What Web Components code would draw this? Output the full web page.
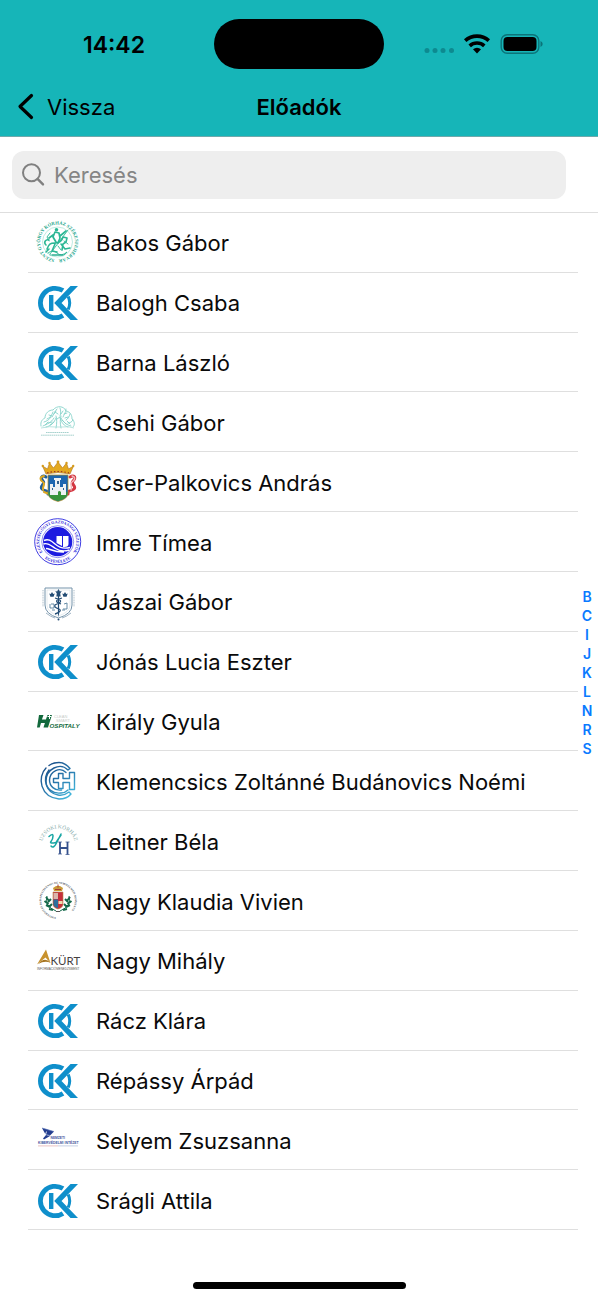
<!DOCTYPE html>
<html lang="hu">
<head>
<meta charset="utf-8">
<meta name="viewport" content="width=device-width, initial-scale=1">
<title>Előadók</title>
<style>
  html, body {
    margin: 0;
    padding: 0;
  }

  body {
    background: #fff;
    color: #0a0a0a;
    font-family: Inter, "Liberation Sans", sans-serif;
  }
</style>
</head>
<body>
<speakers-screen></speakers-screen>

<script>
/* Organisation logos, all drawn on a 48x48 canvas */
const LOGOS = {
  ck: `
    <g fill="none" stroke="#0f8fcb">
      <path d="M29 12.600A14.700 14.700 0 1 0 29 37.400" stroke-width="4.800"/>
      <path d="M17.200 17v16" stroke-width="4.400"/>
      <path d="M34.200 18.500q3 6.500 0 13" stroke-width="3"/>
    </g>
    <path d="M36.500 8H44L27.500 25 44 42h-7.500L20.200 25z" fill="#0f8fcb"/>`,

  gyorgy: `
    <path id="ring" d="M23.500 41.500a17.500 17.500 0 1 1 .1 0" fill="none"/>
    <circle cx="23.500" cy="24" r="15" fill="none" stroke="#7fd6c2" stroke-width=".5"/>
    <text font-family="Liberation Serif" font-weight="700" font-size="4.700" fill="#21a58a"><textPath href="#ring" startOffset="3">SZENT GYÖRGY KÓRHÁZ SZÉKESFEHÉRVÁR</textPath></text>
    <g fill="none" stroke="#2cb795" stroke-linecap="round" stroke-linejoin="round">
      <path d="M13 31c2-5 3-6 8-6s7-2 8-6l4 1-1 4-3 2-1 6M15 31l-3 3M21 26l-3 7 5 1M27 26l4 5 5-1M12 27c-3-3 0-6 3-5" stroke-width="1.600"/>
      <path d="M22 24l-3-5 2-5 4 1 1 5-2 5M19 17l-4 3M26 18l6-5" stroke-width="1.700"/>
      <path d="M34 12L16 36M14 35q5-4 9 0t10-1l-3 3H16M16 15l-3 4 2 4M24 28l3 4M30 23l4 3" stroke-width=".9"/>
    </g>
    <circle cx="22.500" cy="11.800" r="1.800" fill="#2cb795"/>
    <path d="M18 37h11" stroke="#21a58a" stroke-width="1"/>`,

  tree: `
    <g fill="none" stroke="#86d3ca" stroke-width=".9" stroke-linecap="round">
      <path d="M7 28c-1-5 2-7 4-8 0-5 4-8 8-8 4-5 11-4 13 1 5 1 6 5 6 8 3 3 3 6 1 8"/>
      <path d="M9 28c4-2 8-3 11-8M12 29c5-1 8-4 10-9M37 28c-4-1-7-3-10-8M34 29c-4-1-6-4-8-9M22 30c1-5 1-8 0-12M27 30c-1-5-1-8 0-12"/>
      <path d="M10 24c3-1 5-2 7-5M13 21c3-1 5-4 6-7M18 19c2-3 3-6 5-8M26 18c1-3 1-5 0-8M29 19c1-3 3-4 3-8M32 22c2-1 3-3 4-6M34 25c2 0 4-1 5-3"/>
      <path d="M14 25l4-1M15 17l3 1M21 14l3 2M29 13l-2 3M34 19l-3 1M16 27l4-3M32 26l-4-4M11 27l3-3M36 26l-3-3M20 16l2-3M30 16l3-1M23 21l3-2"/>
    </g>
    <path d="M7 30q9-2 15-1h6q7-1 12 1" fill="none" stroke="#a9ded8" stroke-width=".8"/>
    <path d="M12 34.500h23M7 37.200h33" stroke="#9cccc7" stroke-width=".9" stroke-dasharray="1.600 .5"/>`,

  castle: `
    <g fill="none" stroke-width="3" stroke-linecap="round">
      <path d="M12 19c-4-3-6 1-3 4s-4 5-1 8 6 0 6 5" stroke="#1f5f9c"/>
      <path d="M10 18c-5 1-4 4-1 6s-1 5 0 8M10 34l5 2" stroke="#dca722" stroke-width="2"/>
      <path d="M36 19c5-3 6 1 3 4s4 5 1 8-6 0-6 5" stroke="#d33742"/>
      <path d="M38 18c4 1 3 4 0 6s1 5-1 8" stroke="#f1b5b9" stroke-width="1.400"/>
    </g>
    <path d="M14 17h20v18q0 6-10 8.500Q14 41 14 35z" fill="#1d66b0" stroke="#b8901c" stroke-width=".7"/>
    <path d="M14.500 34q9-3 19 0v2q-1 5-9.500 7-9-2-9.500-7z" fill="#36933b"/>
    <path d="M16 37V26h3v3h2v-7h-1v-2h7v2h-1v7h3v-3h3v11h-5v-3q-2-2-3 0v3z" fill="#edf1f4"/>
    <path d="M23 23h2v3h-2zM18 30h1v2h-1zM29 30h1v2h-1z" fill="#315f8d"/>
    <path d="M12 16L8.500 8l5 3 2-6 4 5L24 4l4.500 6 4-5 2 6 5-3L36 16q-12-3-24 0z" fill="#e4a91f" stroke="#ad721b" stroke-width=".6"/>
    <path d="M13 15q11-3 22 0" fill="none" stroke="#9c3424" stroke-width="1.200" stroke-dasharray="1.500 2"/>
    <g fill="#d69b1c"><circle cx="24" cy="4" r="1.400"/><circle cx="15.500" cy="5" r="1.200"/><circle cx="32.500" cy="5" r="1.200"/><circle cx="8.800" cy="8" r="1.200"/><circle cx="39.200" cy="8" r="1.200"/></g>`,

  economy: `
    <path id="top" d="M8.500 34.200a18.500 18.500 0 1 1 30.500 0" fill="none"/>
    <path id="low" d="M8.500 38.500a21.300 21.300 0 0 0 30.500 0" fill="none"/>
    <circle cx="23.700" cy="23.700" r="23" fill="none" stroke="#2a28df" stroke-width=".9"/>
    <circle cx="23.700" cy="23.700" r="16" fill="none" stroke="#2a28df" stroke-width=".5"/>
    <g font-family="Liberation Serif" font-weight="700" font-size="4.100" fill="#2320d8">
      <text><textPath href="#top" startOffset="50%" text-anchor="middle">EGÉSZSÉGÜGYI GAZDASÁGI VEZETŐK</textPath></text>
      <text><textPath href="#low" startOffset="50%" text-anchor="middle">EGYESÜLETE</textPath></text>
    </g>
    <circle cx="23.700" cy="23.700" r="14.600" fill="#1d1be0"/>
    <path d="M22.500 18h5.500v10l-5.500-3zM29 18h5.500v8q0 3-4 3H29z" fill="#fff"/>
    <path d="M10 22.500c4-2 7 0 11 3.500s9 5 15 3.500M9.500 26c4-2 8 2 12 4.500s9 3 14 1.500M12 30.500c4 0 8 4 18 3.500" fill="none" stroke="#fff" stroke-width="1.400"/>`,

  shield: `
    <path d="M11 11h27v17q0 9-13.500 13Q11 37 11 28z" fill="#fff" stroke="#7593aa" stroke-width="1"/>
    <path d="M13 13h23v15q0 7-11.500 11Q13 35 13 28z" fill="none" stroke="#bdccd6" stroke-width=".4"/>
    <g fill="#244d75">
      <path d="M24.500 12l1.400 2.500 1.800-.5-1.500 2.500.5 3h-4.400l.5-3-1.500-2.500 1.800.5zM18 15l1.200 2 1.500-.4-1.100 3.200h-3.200l-1.100-3.200 1.500.4zM31 15l1.200 2 1.500-.4-1.100 3.200h-3.200l-1.100-3.200 1.500.4z"/>
      <path d="M23.900 18h1.200v19l-.6 3-.6-3z"/>
    </g>
    <g fill="none" stroke="#244d75">
      <path d="M21 21c7 2 7 4 2 6s-1 4 2 5 0 4-4 5M28 21c-7 2-7 4-1 6" stroke-width="1.300"/>
      <path d="M16 27v4h4v-4h-3M30 27l3-1v6h-4M18 33h3M28 33h3" stroke-width=".9" stroke="#557f9c"/>
    </g>
    <path d="M9 13v17M40 13v17" stroke="#93a8b7" stroke-width=".8" stroke-dasharray="1 .7"/>
    <path d="M12 36q5 4 9 5M37 36q-5 4-9 5" fill="none" stroke="#86a0b4" stroke-width=".8"/>
    <circle cx="24.500" cy="42.500" r="1" fill="#244d75"/>`,

  hospitaly: `
    <path d="M5 18h4.500l-1.600 4.500h4L13.500 18H18l-1.500 4.500L14 30.500H9.500l1.400-4.500H7l-1.300 4.500H3z" fill="#12693c"/>
    <path d="M13.500 19.500h4M15.500 18v4" stroke="#fff" stroke-width="1"/>
    <text x="15.500" y="30.500" font-family="Liberation Sans" font-size="6.200" font-weight="700" font-style="italic" fill="#12693c">OSPITALY</text>
    <g font-family="Liberation Sans" font-size="4" fill="#c8cdca"><text x="20" y="21">CLEAN</text><text x="22" y="24.800">SMART</text></g>`,

  cross: `
    <linearGradient id="sea" gradientUnits="userSpaceOnUse" x1="10" y1="8" x2="38" y2="40"><stop offset="0" stop-color="#174a85"/><stop offset=".55" stop-color="#2b7db1"/><stop offset="1" stop-color="#45bde0"/></linearGradient>
    <g fill="none" stroke="url(#sea)" stroke-width="1.400" stroke-linejoin="round" stroke-linecap="round">
      <path d="M12 11C3 20 6 40 25 42q8 0 12-5l-2-2q-5 4-11 3C12 36 8 22 15 13"/>
      <path d="M36 11.500Q31 5.500 25 5.500 19 5.500 15 8.500M36 11.500l-2 1.500C26 5 12 12 12 24c0 8 7 13 15 12q4 0 7-3"/>
      <path d="M32 15.500C26 9.500 16 14 15.500 23c0 6 5 11 12 10"/>
      <path d="M19.500 21.500h5v-5h4.500v5h6.500v-6h5v17h-5v-7H29v6h-4.500v-6h-5z"/>
    </g>`,

  uzsoki: `
    <path id="arc" d="M8.500 32A16.500 16.500 0 1 1 40.500 32" fill="none"/>
    <text font-family="Liberation Serif" font-size="5.400" fill="#84aaa9"><textPath href="#arc" startOffset="50%" text-anchor="middle">UZSOKI KÓRHÁZ</textPath></text>
    <path d="M15 19.500q4-3.500 4-.5t-2 5.500 5 1l5-7.500M27 17l-4.500 9q-3 6-5.500 3" fill="none" stroke="#18a6a4" stroke-width="1.500" stroke-linecap="round"/>
    <path d="M26 25v12M33.500 25v12.500M26 31h7.500" fill="none" stroke="#34508c" stroke-width="1.800"/>
    <path d="M24 25h4M24 37h4M31.500 25h4M31.500 37.500h4" stroke="#34508c" stroke-width=".7"/>`,

  university: `
    <path id="seal" d="M24 40.300a16.800 16.800 0 1 1 .1 0" fill="none"/>
    <text font-family="Liberation Serif" font-weight="700" font-size="2.800" fill="#515963"><textPath href="#seal" startOffset="2">UNIVERSITAS BUDAPESTINENSIS DE SEMMELWEIS NOMINATA</textPath></text>
    <g fill="none" stroke="#15694b">
      <path d="M13 19q-3 10 9 15M35 19q3 10-9 15" stroke-width="1"/>
      <path d="M12 20l3 4M10.500 24l4 3M12 28l4 2M15 32l4 1M17 22l-3 3M18 27l-3 3M36 20l-3 4M37.500 24l-4 3M36 28l-4 2M33 32l-4 1M31 22l3 3M30 27l3 3" stroke-width="2"/>
    </g>
    <path d="M19 15h10v13q-1 3-5 4-4-1-5-4z" fill="#c52f3c" stroke="#b38b48" stroke-width=".6"/>
    <path d="M19.500 22.500H24V31q-4-1-4.500-3.500z" fill="#2d6f9c"/>
    <path d="M19.500 16H24v6h-4.500z" fill="#d9b5ab"/>
    <path d="M24.500 24h4v3h-4z" fill="#f1d9ad"/>
    <path d="M20 14l-1-3 3-2h4l3 2-1 3z" fill="#c99a37"/>
    <path d="M21 12.500h6M24 7.500v3" stroke="#a63b32" stroke-width="1"/>
    <path d="M22 34.500h4" stroke="#555" stroke-width="1"/>`,

  kurt: `
    <path d="M12 13.500l4.500 13.500-5-5.500L3 28.500z" fill="#c8922d"/>
    <path d="M4 28q7-8 12.500-1-5-3-12.500 1z" fill="#a77420"/>
    <text x="16.500" y="29" font-family="Lato" font-size="11.500" fill="#46403f">KÜRT</text>
    <text x="3" y="33.700" font-family="Liberation Sans" font-size="3" fill="#595450">INFORMÁCIÓMENEDZSMENT</text>`,

  cyber: `
    <path d="M8 12l6 1.500-3 4zM13.500 13.500l6.500 2-4 4-4-1zM12 19l4 1-6 3.500-1-1z" fill="#233d8f"/>
    <path d="M8 12l12 3.500M11 17.500l5 2" stroke="#617abb" stroke-width=".6"/>
    <g font-family="Liberation Sans" font-weight="700" fill="#3f559c">
      <text x="16.500" y="23.400" font-size="3.300">NEMZETI</text>
      <text x="4" y="27.900" font-size="3.400">KIBERVÉDELMI INTÉZET</text>
    </g>
    <path d="M4 29.900h20" stroke="#e1aaa8" stroke-width=".7"/><path d="M24 29.900h20" stroke="#aebbd8" stroke-width=".7"/>`
};

const SPEAKERS = [
  ['Bakos Gábor', 'gyorgy'],
  ['Balogh Csaba', 'ck'],
  ['Barna László', 'ck'],
  ['Csehi Gábor', 'tree'],
  ['Cser-Palkovics András', 'castle'],
  ['Imre Tímea', 'economy'],
  ['Jászai Gábor', 'shield'],
  ['Jónás Lucia Eszter', 'ck'],
  ['Király Gyula', 'hospitaly'],
  ['Klemencsics Zoltánné Budánovics Noémi', 'cross'],
  ['Leitner Béla', 'uzsoki'],
  ['Nagy Klaudia Vivien', 'university'],
  ['Nagy Mihály', 'kurt'],
  ['Rácz Klára', 'ck'],
  ['Répássy Árpád', 'ck'],
  ['Selyem Zsuzsanna', 'cyber'],
  ['Srágli Attila', 'ck']
];

/**
 * Phone status bar: clock, camera cutout, signal, wifi and battery
 */
class StatusBar extends HTMLElement {
  constructor() {
    super();
    this.attachShadow({ mode: 'open' });
  }

  connectedCallback() {
    this.shadowRoot.innerHTML = `
      <style>
        :host {
          display: grid;
          grid-template-columns: 1fr 170px 1fr;
          align-items: center;
          padding: 19px 14px 9px;
        }

        .time {
          padding-top: 2px;
          text-align: center;
          font-size: 23px;
          font-weight: 600;
        }

        .cutout {
          height: 50px;
          border-radius: 25px;
          background: #000;
        }

        .icons {
          display: flex;
          justify-content: center;
          align-items: center;
        }

        svg {
          display: block;
        }
      </style>
      <time class="time">14:42</time>
      <div class="cutout"></div>
      <div class="icons">
        <svg width="120" height="24" viewBox="0 0 120 24" aria-hidden="true">
          <g fill="#0d8a90"><circle cx="3" cy="18.500" r="2.500"/><circle cx="11" cy="18.500" r="2.500"/><circle cx="19" cy="18.500" r="2.500"/><circle cx="27.500" cy="18.500" r="2.500"/></g>
          <g fill="none" stroke="#000" stroke-width="3.600">
            <path d="M41.200 8.700a17.500 17.500 0 0 1 23.600 0"/>
            <path d="M45.700 13.800a10.800 10.800 0 0 1 14.600 0"/>
          </g>
          <path d="M49 17.200a6 6 0 0 1 8 0l-4 4.200z"/>
          <rect x="77.200" y="2.700" width="37.600" height="18.600" rx="6" fill="none" stroke="#0b7479" stroke-width="1.400"/>
          <rect x="79.500" y="5" width="33" height="14" rx="4"/>
          <path d="M116.500 9v6q2.200-.8 2.200-3t-2.200-3z" fill="#0b7479"/>
        </svg>
      </div>
    `;
  }
}

/**
 * Navigation bar with a back button and a slotted title
 */
class NavHeader extends HTMLElement {
  constructor() {
    super();
    this.attachShadow({ mode: 'open' });
  }

  connectedCallback() {
    this.shadowRoot.innerHTML = `
      <style>
        :host {
          display: grid;
          grid-template-columns: 1fr auto 1fr;
          align-items: center;
          height: 58px;
          border-bottom: 1px solid #6fa9ab;
        }

        button {
          display: flex;
          align-items: center;
          justify-self: start;
          gap: 12px;
          padding: 0 0 0 17px;
          border: 0;
          background: none;
          color: inherit;
          font: inherit;
          font-size: 22px;
          cursor: pointer;
        }

        h1 {
          margin: 0;
          font-size: 22px;
          font-weight: 600;
        }
      </style>
      <button type="button">
        <svg width="18" height="28" viewBox="0 0 18 28" fill="none" stroke="#000" stroke-width="3.200" stroke-linecap="round" stroke-linejoin="round" aria-hidden="true"><path d="M14.500 2.500L3 13.500l11.500 11"/></svg>
        <span>Vissza</span>
      </button>
      <h1><slot></slot></h1>
    `;
  }
}

/**
 * Search box, filters the list while typing
 */
class SearchField extends HTMLElement {
  constructor() {
    super();
    this.attachShadow({ mode: 'open' });
  }

  connectedCallback() {
    const label = this.getAttribute('label');
    this.shadowRoot.innerHTML = `
      <style>
        :host {
          display: block;
          padding: 14px 32px 13px 12px;
          border-bottom: 1px solid #dedede;
        }

        label {
          display: flex;
          align-items: center;
          gap: 8px;
          height: 48px;
          padding: 0 10px;
          border-radius: 12px;
          background: #eee;
        }

        svg {
          flex: none;
        }

        input {
          flex: 1;
          min-width: 0;
          padding: 0;
          border: 0;
          outline: 0;
          background: none;
          color: inherit;
          font: inherit;
          font-size: 22px;
        }

        input::placeholder {
          color: #858585;
          opacity: 1;
        }
      </style>
      <label>
        <svg width="24" height="24" viewBox="0 0 24 24" fill="none" stroke="#808080" stroke-width="2" stroke-linecap="round" aria-hidden="true"><circle cx="9.500" cy="9.800" r="8.500"/><path d="M15.800 16.200l5.200 5.200" stroke-width="2.400"/></svg>
        <input type="text" placeholder="${label}" aria-label="${label}">
      </label>
    `;

    this.shadowRoot.querySelector('input').addEventListener('input', (e) => {
      this.dispatchEvent(new CustomEvent('search', { detail: e.target.value }));
    });
  }
}

/**
 * Logo of the speaker's organisation
 */
class OrgLogo extends HTMLElement {
  constructor() {
    super();
    this.attachShadow({ mode: 'open' });
  }

  connectedCallback() {
    this.shadowRoot.innerHTML = `
      <style>
        :host {
          display: block;
          flex: none;
        }

        svg {
          display: block;
        }
      </style>
      <svg width="48" height="48" viewBox="0 0 48 48" aria-hidden="true">${LOGOS[this.getAttribute('name')]}</svg>
    `;
  }
}

/**
 * One speaker: logo and slotted name
 */
class SpeakerRow extends HTMLElement {
  constructor() {
    super();
    this.attachShadow({ mode: 'open' });
  }

  connectedCallback() {
    this.shadowRoot.innerHTML = `
      <style>
        :host {
          display: flex;
          flex: 1 1 0;
          min-height: 56px;
          max-height: 72px;
          border-bottom: 1px solid #dfdfdf;
          box-sizing: border-box;
        }

        :host([hidden]) {
          display: none;
        }

        a {
          display: flex;
          flex: 1;
          align-items: center;
          gap: 14px;
          padding-left: 6px;
          color: inherit;
          font-size: 22px;
          line-height: 28px;
          text-decoration: none;
        }

        span {
          padding-top: 2px;
        }
      </style>
      <a href="#">
        <org-logo name="${this.getAttribute('logo')}"></org-logo>
        <span><slot></slot></span>
      </a>
    `;
  }
}

/**
 * Letter shortcuts beside the list
 */
class LetterIndex extends HTMLElement {
  constructor() {
    super();
    this.attachShadow({ mode: 'open' });
  }

  connectedCallback() {
    const links = [...this.getAttribute('letters')].map(l => `<a href="#${l}">${l}</a>`).join('');
    this.shadowRoot.innerHTML = `
      <style>
        :host {
          display: flex;
          flex: none;
          width: 18px;
          padding: 0 2px 98px 0;
        }

        nav {
          display: flex;
          flex: 1;
          flex-direction: column;
          justify-content: center;
        }

        a {
          color: #0a7aff;
          font-size: 14px;
          font-weight: 600;
          line-height: 19px;
          text-align: center;
          text-decoration: none;
        }
      </style>
      <nav aria-label="Betűk">${links}</nav>
    `;
  }
}

/**
 * The whole speakers page
 */
class SpeakersScreen extends HTMLElement {
  constructor() {
    super();
    this.attachShadow({ mode: 'open' });
  }

  connectedCallback() {
    const rows = SPEAKERS.map(([name, logo]) => `<speaker-row logo="${logo}">${name}</speaker-row>`).join('');
    this.shadowRoot.innerHTML = `
      <style>
        :host {
          display: flex;
          flex-direction: column;
          min-height: 100vh;
        }

        header {
          background: #16b5b8;
          color: #000;
        }

        main {
          display: flex;
          flex: 1;
        }

        .list {
          display: flex;
          flex: 1;
          flex-direction: column;
          min-width: 0;
          padding-left: 28px;
        }

        footer {
          display: flex;
          justify-content: center;
          align-items: flex-end;
          height: 59px;
          padding-bottom: 11px;
        }

        .home {
          width: 213px;
          height: 7px;
          border-radius: 4px;
          background: #000;
        }
      </style>
      <header>
        <status-bar></status-bar>
        <nav-header>Előadók</nav-header>
      </header>
      <search-field label="Keresés"></search-field>
      <main>
        <div class="list">${rows}</div>
        <letter-index letters="BCIJKLNRS"></letter-index>
      </main>
      <footer><div class="home"></div></footer>
    `;

    this.shadowRoot.querySelector('search-field').addEventListener('search', (e) => {
      this.filter(e.detail);
    });
  }

  /**
   * Show only the speakers whose name contains the text
   * @param {string} text - Search text
   */
  filter(text) {
    const query = text.trim().toLowerCase();
    this.shadowRoot.querySelectorAll('speaker-row').forEach(row => {
      row.hidden = !row.textContent.toLowerCase().includes(query);
    });
  }
}

customElements.define('status-bar', StatusBar);
customElements.define('nav-header', NavHeader);
customElements.define('search-field', SearchField);
customElements.define('org-logo', OrgLogo);
customElements.define('speaker-row', SpeakerRow);
customElements.define('letter-index', LetterIndex);
customElements.define('speakers-screen', SpeakersScreen);
</script>
</body>
</html>
